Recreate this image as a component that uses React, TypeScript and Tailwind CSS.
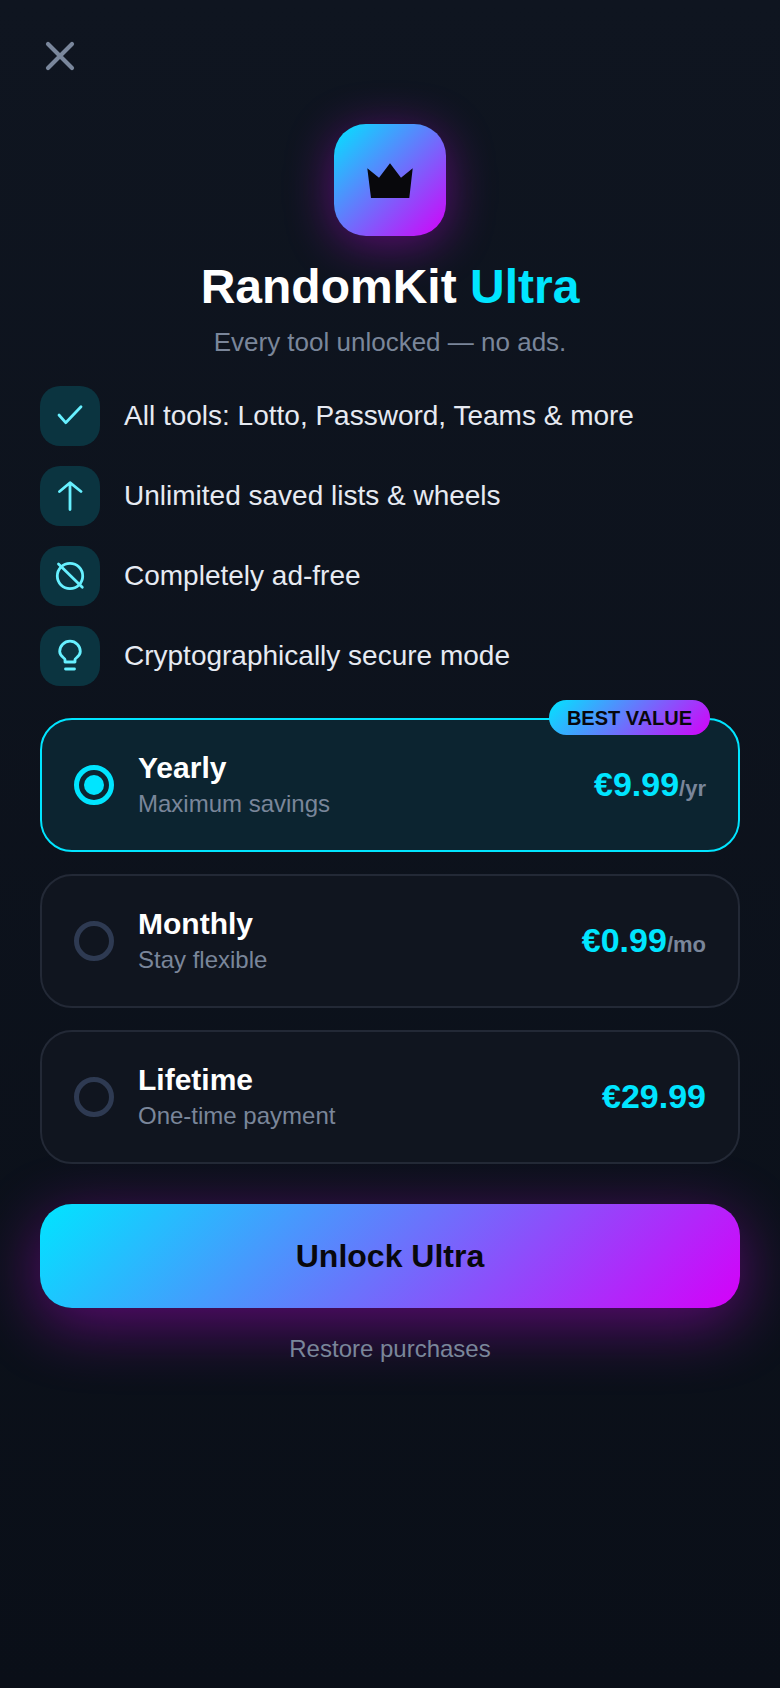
const features = [
  { text: "All tools: Lotto, Password, Teams & more", icon: <path d="M19 29l6.700 7.700L41 20.700" /> },
  { text: "Unlimited saved lists & wheels", icon: <path d="M30 43.500V17M19.500 25.500 30 16.700 41 25.500" /> },
  { text: "Completely ad-free", icon: <><circle cx="30" cy="30" r="12.700" /><path d="M18.500 18 42.300 41.300" /></> },
  { text: "Cryptographically secure mode", icon: <><path d="M25 36h10v-2.500c0-1.500 5.300-3 5.300-8a10.300 10.300 0 0 0-20.600 0c0 5 5.300 6.500 5.300 8z" /><path d="M25.500 43h9" /></> },
];

const plans = [
  { name: "Yearly", sub: "Maximum savings", price: "€9.99", per: "/yr", active: true },
  { name: "Monthly", sub: "Stay flexible", price: "€0.99", per: "/mo", active: false },
  { name: "Lifetime", sub: "One-time payment", price: "€29.99", per: "", active: false },
];

export default function App() {
  return (
    <div className="h-[1688px] w-[780px] overflow-hidden bg-gradient-to-b from-[#0f1520] to-[#0a0f18] px-10 font-['Liberation_Sans',sans-serif] text-white">
      <div className="pt-10">
        <svg width="32" height="32" viewBox="0 0 32 32" fill="none" stroke="#7a879c" strokeWidth="4.200" strokeLinecap="round" className="ml-[4px]">
          <path d="M4 4l24 24M28 4 4 28" />
        </svg>
      </div>

      <div className="mt-[52px] flex flex-col items-center">
        <div className="flex h-28 w-28 items-center justify-center rounded-[32px] bg-[linear-gradient(135deg,#00e5ff,#d500f9)] shadow-[0_8px_48px_rgba(213,0,249,0.4)]">
          <svg width="46" height="35" viewBox="0 0 46 35" fill="#08080c">
            <path d="M.300 5.200 12 14.800 23 .2 34 14.800 45.700 5.200 42.300 35H4z" />
          </svg>
        </div>
        <h1 className="mt-[21px] text-[48px] font-bold leading-[60px]">
          RandomKit <span className="text-[#00e5ff]">Ultra</span>
        </h1>
        <p className="mt-[7px] text-[26px] leading-[36px] text-[#7a869a]">Every tool unlocked — no ads.</p>
      </div>

      <div className="mt-[26px] flex flex-col gap-5">
        {features.map((f) => (
          <div key={f.text} className="flex items-center gap-6">
            <div className="flex h-[60px] w-[60px] items-center justify-center rounded-[20px] bg-[#0b3440]">
              <svg width="60" height="60" viewBox="0 0 60 60" fill="none" stroke="#67f0ff" strokeWidth="2.800" strokeLinecap="round" strokeLinejoin="round">
                {f.icon}
              </svg>
            </div>
            <span className="text-[28px] leading-[40px] text-[#e6eaf2]">{f.text}</span>
          </div>
        ))}
      </div>

      <div className="mt-8 flex flex-col gap-[22px]">
        {plans.map((p) => (
          <div
            key={p.name}
            className={
              p.active
                ? "relative flex h-[134px] items-center rounded-[32px] border-2 border-[#00e5ff] bg-[#0c2430] px-8"
                : "relative flex h-[134px] items-center rounded-[32px] border-2 border-[#232936] bg-[#10151f] px-8"
            }
          >
            {p.active && (
              <div className="absolute right-[28px] top-[-20px] flex h-[35px] w-[161px] items-center justify-center rounded-full bg-[linear-gradient(135deg,#00e5ff,#d500f9)] text-[20px] font-bold text-[#08080c]">
                BEST VALUE
              </div>
            )}
            <div
              className={
                p.active
                  ? "flex h-10 w-10 items-center justify-center rounded-full border-[5px] border-[#00e5ff]"
                  : "flex h-10 w-10 items-center justify-center rounded-full border-[5px] border-[#2e3a52]"
              }
            >
              {p.active && <div className="h-5 w-5 rounded-full bg-[#00e5ff]" />}
            </div>
            <div className="ml-6 flex flex-col">
              <span className="text-[30px] font-bold leading-[36px]">{p.name}</span>
              <span className="mt-[2px] text-[24px] leading-[32px] text-[#7a869a]">{p.sub}</span>
            </div>
            <div className="ml-auto mb-[2px] flex items-baseline font-bold">
              <span className="text-[34px] text-[#00e5ff]">{p.price}</span>
              {p.per && <span className="text-[22px] text-[#7a869a]">{p.per}</span>}
            </div>
          </div>
        ))}
      </div>

      <div className="mt-10 flex h-[104px] items-center justify-center rounded-[32px] bg-[linear-gradient(135deg,#00e5ff,#d500f9)] text-[32px] font-bold text-[#08080c] shadow-[0_16px_64px_rgba(213,0,249,0.4)]">
        Unlock Ultra
      </div>
      <p className="mt-[25px] text-center text-[24px] leading-[32px] text-[#7a869a]">Restore purchases</p>
    </div>
  );
}
